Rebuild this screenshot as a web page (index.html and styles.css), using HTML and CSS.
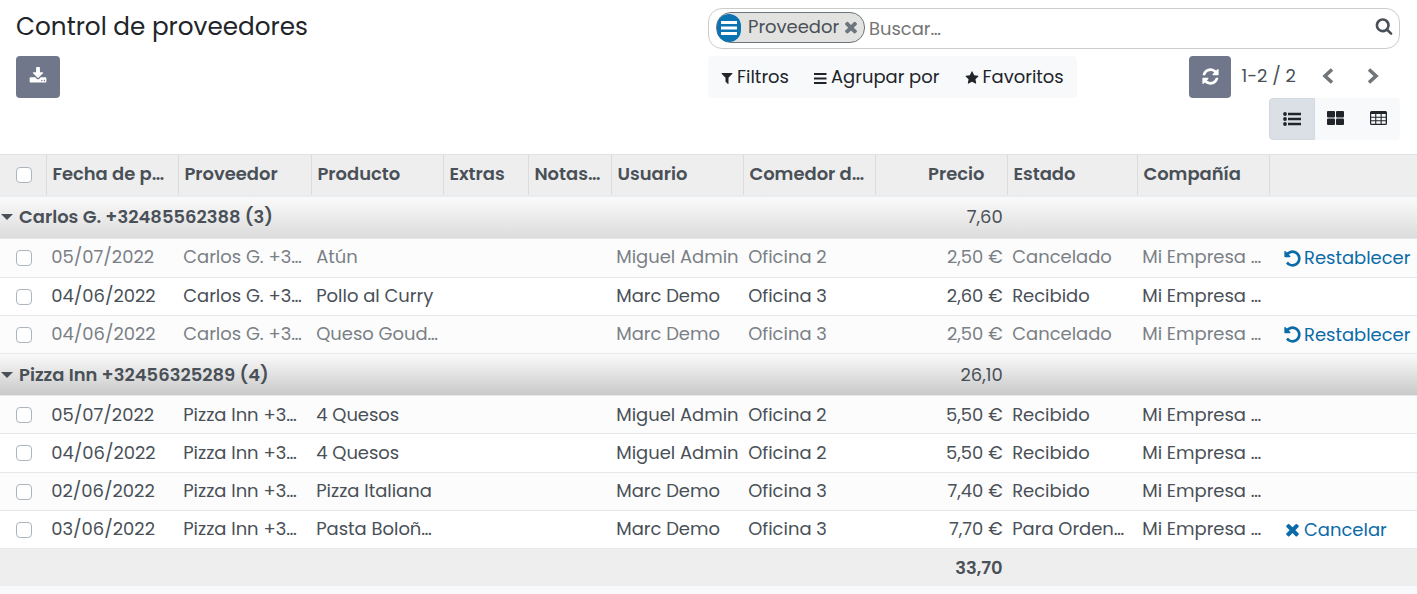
FILE: index.html
```html
<!DOCTYPE html>
<html lang="es">
<head>
<meta charset="utf-8">
<title>Control de proveedores</title>
<link rel="stylesheet" href="styles.css">
</head>
<body>
<svg class="defs" width="0" height="0" aria-hidden="true">
  <symbol id="times" viewBox="0 0 1792 1792"><path d="M1490 1322q0 40-28 68l-136 136q-28 28-68 28t-68-28l-294-294-294 294q-28 28-68 28t-68-28l-136-136q-28-28-28-68t28-68l294-294-294-294q-28-28-28-68t28-68l136-136q28-28 68-28t68 28l294 294 294-294q28-28 68-28t68 28l136 136q28 28 28 68t-28 68l-294 294 294 294q28 28 28 68z"/></symbol>
  <symbol id="undo" viewBox="0 0 1792 1792"><path d="M1664 896q0 156-61 298t-164 245-245 164-298 61q-172 0-327-72.500t-264-204.500q-7-10-6.500-22.500t8.500-20.500l137-138q10-9 25-9 16 2 23 12 73 95 179 147t225 52q104 0 198.500-40.500t163.500-109.500 109.500-163.500 40.500-198.500-40.500-198.500-109.500-163.500-163.500-109.500-198.500-40.500q-98 0-188 35.500t-160 101.500l137 138q31 30 14 69-17 40-59 40h-448q-26 0-45-19t-19-45v-448q0-42 40-59 39-17 69 14l130 129q107-101 244.500-156.500t284.500-55.500q156 0 298 61t245 164 164 245 61 298z"/></symbol>
</svg>

<header class="panel">
  <div class="left">
    <h1>Control de proveedores</h1>
    <button class="btn export"><svg width="18" height="18" viewBox="0 0 1792 1792"><path d="M1344 1344q0-26-19-45t-45-19-45 19-19 45 19 45 45 19 45-19 19-45zm256 0q0-26-19-45t-45-19-45 19-19 45 19 45 45 19 45-19 19-45zm128-224v320q0 40-28 68t-68 28h-1472q-40 0-68-28t-28-68v-320q0-40 28-68t68-28h465l135 136q58 56 136 56t136-56l136-136h464q40 0 68 28t28 68zm-325-569q17 41-14 70l-448 448q-18 19-45 19t-45-19l-448-448q-31-29-14-70 17-39 59-39h256v-448q0-26 19-45t45-19h256q26 0 45 19t19 45v448h256q42 0 59 39z"/></svg></button>
  </div>
  <div class="right">
    <div class="search">
      <div class="facet">
        <span class="facet-icon"><svg width="18" height="16" viewBox="0 0 18 16"><path d="M1 1h16v3H1zM1 6.500h16v3H1zM1 12h16v3H1z"/></svg></span>
        <span>Proveedor</span>
        <svg class="remove" width="18" height="18"><use href="#times"/></svg>
      </div>
      <span class="placeholder">Buscar…</span>
      <svg class="lens" width="18" height="18" viewBox="0 0 1792 1792"><path d="M1216 832q0-185-131.500-316.500t-316.500-131.500-316.500 131.500-131.500 316.500 131.500 316.500 316.500 131.500 316.500-131.500 131.500-316.500zm512 832q0 52-38 90t-90 38q-54 0-90-38l-343-342q-179 124-399 124-143 0-273.500-55.500t-225-150-150-225-55.500-273.500 55.500-273.500 150-225 225-150 273.500-55.500 273.500 55.500 225 150 150 225 55.500 273.500q0 220-124 399l343 343q37 37 37 90z"/></svg>
    </div>
    <div class="tools">
      <div class="filters">
        <span class="tool"><svg width="14" height="14" viewBox="0 0 1792 1792"><path d="M1595 295q17 41-14 70l-493 493v742q0 42-39 59-13 5-25 5-27 0-45-19l-256-256q-19-19-19-45v-486l-493-493q-31-29-14-70 17-39 59-39h1280q42 0 59 39z"/></svg><span>Filtros</span></span>
        <span class="tool group"><svg width="14" height="14" viewBox="0 0 14 14"><path d="M1 2h12.500v2H1zM1 6.500h12.500v2H1zM1 11h12.500v2H1z"/></svg><span>Agrupar por</span></span>
        <span class="tool fav"><svg width="14" height="14" viewBox="0 0 1792 1792"><path d="M1728 647q0 22-26 48l-363 354 86 500q1 7 1 20 0 21-10.500 35.500t-30.500 14.500q-19 0-40-12l-449-236-449 236q-22 12-40 12-21 0-31.500-14.500t-10.500-35.500q0-6 2-20l86-500-364-354q-25-27-25-48 0-37 56-46l502-73 225-455q19-41 49-41t49 41l225 455 502 73q56 9 56 46z"/></svg><span>Favoritos</span></span>
      </div>
      <div class="pager">
        <button class="btn refresh"><svg width="19" height="19" viewBox="0 0 1792 1792"><path d="M1639 1056q0 5-1 7-64 268-268 434.500t-478 166.500q-146 0-282.500-55t-243.500-157l-129 129q-19 19-45 19t-45-19-19-45v-448q0-26 19-45t45-19h448q26 0 45 19t19 45-19 45l-137 137q71 66 161 102t187 36q134 0 250-65t186-179q11-17 53-117 8-23 30-23h192q13 0 22.500 9.500t9.500 22.500zm25-800v448q0 26-19 45t-45 19h-448q-26 0-45-19t-19-45 19-45l138-138q-148-137-349-137-134 0-250 65t-186 179q-11 17-53 117-8 23-30 23h-199q-13 0-22.500-9.500t-9.500-22.500v-7q65-268 270-434.500t480-166.500q146 0 284 55.500t245 156.500l130-129q19-19 45-19t45 19 19 45z"/></svg></button>
        <span class="count">1-2 / 2</span>
        <svg class="chev" width="14" height="18" viewBox="0 0 14 18"><path d="M11 2.500 4 9l7 6.500"/></svg>
        <svg class="chev next" width="14" height="18" viewBox="0 0 14 18"><path d="m3 2.500 7 6.500-7 6.500"/></svg>
      </div>
    </div>
    <div class="views">
      <span class="view active"><svg width="18" height="14" viewBox="0 0 18 14"><circle cx="2" cy="2" r="1.900"/><circle cx="2" cy="7" r="1.900"/><circle cx="2" cy="12" r="1.900"/><path d="M5 .700h13v2.600H5zM5 5.700h13v2.600H5zM5 10.700h13v2.600H5z"/></svg></span>
      <span class="view"><svg width="17" height="14" viewBox="0 0 17 14"><rect width="8" height="6.500" rx="1"/><rect x="9" width="8" height="6.500" rx="1"/><rect y="7.500" width="8" height="6.500" rx="1"/><rect x="9" y="7.500" width="8" height="6.500" rx="1"/></svg></span>
      <span class="view"><svg width="17" height="14" viewBox="0 0 17 14"><path fill-rule="evenodd" d="M1.500 0h14Q17 0 17 1.500v11q0 1.500-1.500 1.500h-14Q0 14 0 12.500v-11Q0 0 1.500 0zM1.200 3h4v2.700h-4zM6.300 3h4.300v2.700H6.300zM11.700 3h4v2.700h-4zM1.200 6.700h4v2.500h-4zM6.300 6.700h4.300v2.500H6.300zM11.700 6.700h4v2.500h-4zM1.200 10.200h4v2.600h-4zM6.300 10.200h4.300v2.600H6.300zM11.700 10.200h4v2.600h-4z"/></svg></span>
    </div>
  </div>
</header>

<table class="list">
  <colgroup><col class="c-check"><col class="c-date"><col class="c-vendor"><col class="c-product"><col class="c-extras"><col class="c-notes"><col class="c-user"><col class="c-place"><col class="c-price"><col class="c-state"><col class="c-company"><col></colgroup>
  <thead>
    <tr><th class="check"><i class="box"></i></th><th>Fecha de p…</th><th>Proveedor</th><th>Producto</th><th>Extras</th><th>Notas…</th><th>Usuario</th><th>Comedor d…</th><th class="price">Precio</th><th>Estado</th><th>Compañía</th><th class="last"></th></tr>
  </thead>
  <tbody>
    <tr class="grp"><td colspan="8"><i class="caret"></i>Carlos G. +32485562388 (3)</td><td class="num">7,60</td><td colspan="3"></td></tr>
    <tr class="tall odd muted"><td class="check"><i class="box"></i></td><td>05/07/2022</td><td>Carlos G. +3…</td><td>Atún</td><td></td><td></td><td>Miguel Admin</td><td>Oficina 2</td><td class="num">2,50 €</td><td>Cancelado</td><td>Mi Empresa …</td><td class="act"><a><svg width="19" height="19"><use href="#undo"/></svg>Restablecer</a></td></tr>
    <tr><td class="check"><i class="box"></i></td><td>04/06/2022</td><td>Carlos G. +3…</td><td>Pollo al Curry</td><td></td><td></td><td>Marc Demo</td><td>Oficina 3</td><td class="num">2,60 €</td><td>Recibido</td><td>Mi Empresa …</td><td></td></tr>
    <tr class="odd muted"><td class="check"><i class="box"></i></td><td>04/06/2022</td><td>Carlos G. +3…</td><td>Queso Goud…</td><td></td><td></td><td>Marc Demo</td><td>Oficina 3</td><td class="num">2,50 €</td><td>Cancelado</td><td>Mi Empresa …</td><td class="act"><a><svg width="19" height="19"><use href="#undo"/></svg>Restablecer</a></td></tr>
    <tr class="grp dark low"><td colspan="8"><i class="caret"></i>Pizza Inn +32456325289 (4)</td><td class="num">26,10</td><td colspan="3"></td></tr>
    <tr class="odd low"><td class="check"><i class="box"></i></td><td>05/07/2022</td><td>Pizza Inn +3…</td><td>4 Quesos</td><td></td><td></td><td>Miguel Admin</td><td>Oficina 2</td><td class="num">5,50 €</td><td>Recibido</td><td>Mi Empresa …</td><td></td></tr>
    <tr class="tall low"><td class="check"><i class="box"></i></td><td>04/06/2022</td><td>Pizza Inn +3…</td><td>4 Quesos</td><td></td><td></td><td>Miguel Admin</td><td>Oficina 2</td><td class="num">5,50 €</td><td>Recibido</td><td>Mi Empresa …</td><td></td></tr>
    <tr class="odd"><td class="check"><i class="box"></i></td><td>02/06/2022</td><td>Pizza Inn +3…</td><td>Pizza Italiana</td><td></td><td></td><td>Marc Demo</td><td>Oficina 3</td><td class="num">7,40 €</td><td>Recibido</td><td>Mi Empresa …</td><td></td></tr>
    <tr><td class="check"><i class="box"></i></td><td>03/06/2022</td><td>Pizza Inn +3…</td><td>Pasta Boloñ…</td><td></td><td></td><td>Marc Demo</td><td>Oficina 3</td><td class="num">7,70 €</td><td>Para Orden…</td><td>Mi Empresa …</td><td class="act"><a><svg width="19" height="19"><use href="#times"/></svg>Cancelar</a></td></tr>
  </tbody>
  <tfoot><tr class="low"><td colspan="8"></td><td class="num">33,70</td><td colspan="3"></td></tr></tfoot>
</table>
</body>
</html>
```
FILE: styles.css
```css
* { box-sizing: border-box; }
body {
  margin: 0;
  height: 594px;
  overflow: hidden;
  background: #f8f9fa;
  color: #495057;
  font: 400 17.95px/26px Poppins, Inter, sans-serif;
}
.defs { display: block; width: 0; height: 0; position: absolute; }
svg { fill: currentColor; flex: none; }

/* Control panel */
.panel {
  display: flex;
  justify-content: space-between;
  height: 154px;
  padding: 8px 17px 0 16px;
  background: #fff;
}
h1 {
  margin: 0 0 10px;
  font-size: 24.7px;
  font-weight: 400;
  line-height: 38px;
  color: #212529;
}
.btn {
  display: flex;
  align-items: center;
  justify-content: center;
  height: 42px;
  padding: 0;
  border: 0;
  border-radius: 4px;
  background: #71778b;
  color: #fff;
}
.export { width: 44px; padding-bottom: 2px; }
.refresh { width: 42px; padding-bottom: 1px; }
.right { width: 692px; }
.search {
  display: flex;
  align-items: center;
  height: 41px;
  padding: 0 6px 2px 7px;
  border: 1px solid #ccc;
  border-radius: 14px;
}
.facet {
  display: flex;
  align-items: center;
  width: 149px;
  height: 31px;
  border: 1px solid #6c757d;
  border-radius: 15px;
  background: #e2e2e0;
}
.facet-icon {
  display: flex;
  align-items: center;
  justify-content: center;
  width: 24px;
  height: 28px;
  margin: 0 7px 0 0;
  border-radius: 12px;
  background: #0b73b1;
  color: #fff;
}
.facet span + span { margin-top: -1px; }
.remove { margin: 0 0 2px 3px; color: #6c757d; }
.placeholder { margin: 3px auto 0 4px; color: #757575; }
.lens { margin-bottom: 3px; color: #495057; }
.tools { display: flex; justify-content: space-between; margin-top: 7px; }
.filters {
  display: flex;
  width: 369px;
  height: 42px;
  padding-left: 12px;
  border-radius: 4px;
  background: #f8f9fb;
  color: #212529;
}
.tool { display: flex; align-items: center; gap: 3px; width: 93px; }
.tool svg { margin-top: 2px; }
.group { gap: 4px; width: 151px; }
.fav { gap: 4px; padding-left: .5px; }
.pager { display: flex; align-items: center; width: 211px; }
.count { width: 81px; padding: 0 0 2px 10.5px; }
.chev { margin: 0 0 2px 9px; fill: none; stroke: #71757a; stroke-width: 3.6; }
.next { margin-left: 31px; }
.views { display: flex; width: 131px; height: 42px; margin-left: auto; border-radius: 4px; background: #f8f9fb; color: #212529; }
.view { display: flex; align-items: center; justify-content: center; width: 42px; padding-bottom: 2px; }
.view + .view { width: 43px; }
.view.active { width: 46px; padding-bottom: 0; border: 1px solid #d3d9e0; border-radius: 4px 0 0 4px; background: #dae0e6; }

/* List */
.list { width: 1417px; table-layout: fixed; border-collapse: separate; border-spacing: 0; }
.c-check { width: 47px; }
.c-date { width: 132px; }
.c-vendor { width: 133px; }
.c-product { width: 132px; }
.c-extras { width: 85px; }
.c-notes { width: 83px; }
.c-user, .c-place, .c-price { width: 132px; }
.c-state { width: 130px; }
.c-company { width: 132px; }
th, td { padding: 0 0 0 4.2px; text-align: left; white-space: nowrap; vertical-align: middle; }
th {
  height: 43px;
  padding: 0 0 3px 5.4px;
  border-top: 1px solid #dee2e6;
  border-bottom: 2px solid #e9ecef;
  background: linear-gradient(#dcdcdc, #dcdcdc) right / 1px 100% no-repeat #eee;
  font-weight: 600;
}
th.last { background: #eee; }
th.price { padding-right: 23.5px; text-align: right; }
td { height: 38px; padding-bottom: 2px; border-bottom: 1px solid #e6e9ec; background: #fff; }
.tall td { height: 39px; }
.low td { padding-bottom: 0; }
.odd td { background: #fcfcfc; }
.muted td { color: #7a8086; }
.list .check { padding: 0 0 0 16px; }
.list th.check { padding-bottom: 1px; }
.num { padding-right: 5.3px; text-align: right; }
.box { display: block; width: 16px; height: 16px; border: 1px solid #adb5bd; border-radius: 4px; background: #fff; }
.grp td { height: 42px; background: linear-gradient(#fafafa, #dcdcdc); }
.grp.dark td { background: linear-gradient(#fafafa, #c9c9c9); }
.grp td:first-child { padding-left: 1px; font-weight: 600; }
.caret { display: inline-block; margin-right: 6px; border: solid transparent; border-width: 6px 6px 0; border-top-color: #495057; vertical-align: 3px; }
.list td.act { padding: 0 0 0 13px; }
.act a { display: flex; align-items: center; color: #0b6ba8; }
.act svg { margin-right: 2px; }
tfoot td { height: 37px; border: 0; background: #eee; font-weight: 600; }
```
